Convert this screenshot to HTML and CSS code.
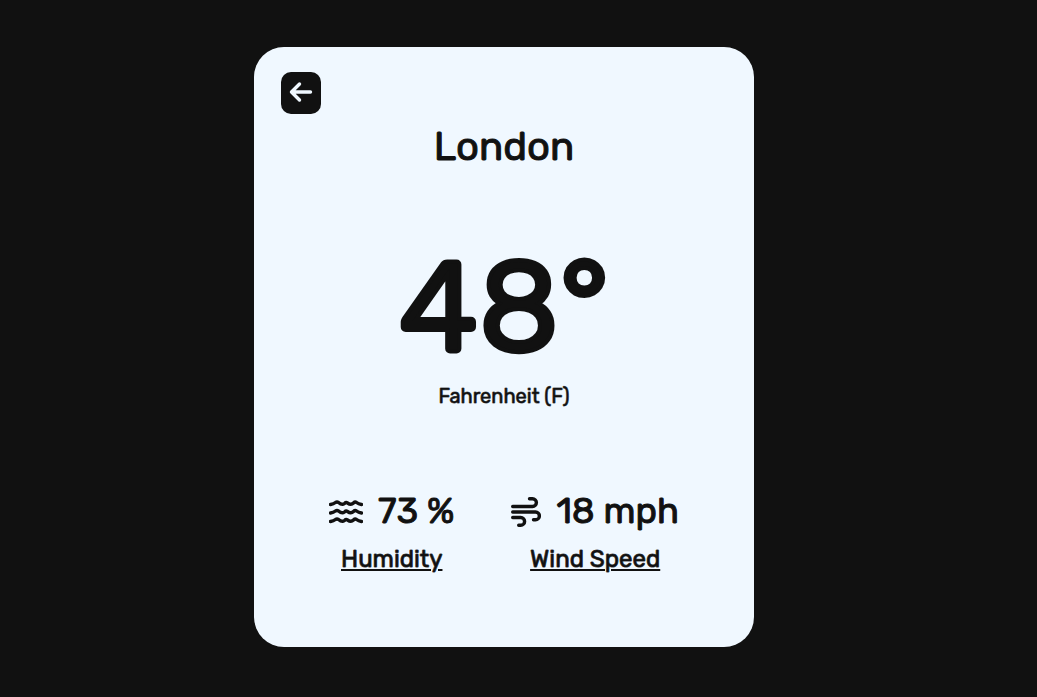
FILE: index.html
```html
<!DOCTYPE html>
<html lang="en">
<head>
<meta charset="utf-8">
<meta name="viewport" content="width=device-width, initial-scale=1">
<title>Weather</title>
<link rel="stylesheet" href="styles.css">
</head>
<body>
<main class="card">
  <button class="back" type="button" aria-label="Back">
    <svg class="back-icon" viewBox="0 0 24 22" aria-hidden="true"><path d="M10.500 3L2.500 11L10.500 19M2.500 11H21.500"/></svg>
  </button>
  <h1 class="city">London</h1>
  <p class="temperature">48°</p>
  <p class="unit">Fahrenheit (F)</p>
  <section class="stats">
    <div class="stat">
      <div class="reading">
        <svg class="waves-icon" viewBox="0 0 34 24" aria-hidden="true">
          <path d="M1.500 4.500Q4.500 4 6.500 2.500Q8 1.500 9.500 2.500Q13 5.500 15.500 3.500Q17 2 18.500 3Q22 5.500 24.500 3Q26 1.500 27.500 2.500Q29.500 4 32.500 4.500"/>
          <path d="M1.500 13Q4.500 12.500 6.500 11Q8 10 9.500 11Q13 14 15.500 12Q17 10.500 18.500 11.500Q22 14 24.500 11.500Q26 10 27.500 11Q29.500 12.500 32.500 13"/>
          <path d="M1.500 21.500Q4.500 21 6.500 19.500Q8 18.500 9.500 19.500Q13 22.500 15.500 20.500Q17 19 18.500 20Q22 22.500 24.500 20Q26 18.500 27.500 19.500Q29.500 21 32.500 21.500"/>
        </svg>
        <span>73 %</span>
      </div>
      <span class="label">Humidity</span>
    </div>
    <div class="stat">
      <div class="reading">
        <svg class="wind-icon" viewBox="0 0 30 30" aria-hidden="true">
          <path d="M1.700 9.500H21.500A3.900 3.900 0 0 0 21.500 1.700H18.500M1.700 15H24.500A3.900 3.900 0 0 1 24.500 22.800H22.500M1.700 20.500H9.700A3.900 3.900 0 0 1 9.700 28.300H7.700"/>
        </svg>
        <span>18 mph</span>
      </div>
      <span class="label">Wind Speed</span>
    </div>
  </section>
</main>
</body>
</html>
```
FILE: styles.css
```css
* {
  box-sizing: border-box;
}

body {
  margin: 0;
  min-height: 100vh;
  padding: 47px 29px 50px 0;
  background: #111;
  color: #111;
  font-family: Rubik, Roboto, sans-serif;
  font-weight: 400;
}

.card {
  display: flex;
  flex-direction: column;
  align-items: center;
  width: 100%;
  max-width: 500px;
  min-height: 600px;
  margin: 0 auto;
  padding: 25px 27px;
  border-radius: 30px;
  background: #f0f8ff;
  -webkit-text-stroke: 1px #111;
}

.back {
  display: flex;
  align-items: center;
  justify-content: center;
  align-self: flex-start;
  width: 40px;
  height: 42px;
  padding: 0 0 2px;
  border: 0;
  border-radius: 10px;
  background: #111;
  color: #f0f8ff;
  cursor: pointer;
}

svg {
  flex: none;
  fill: none;
  stroke: currentColor;
  stroke-width: 3.4;
  stroke-linecap: round;
  stroke-linejoin: round;
}

.back-icon {
  width: 24px;
  height: 22px;
}

.city {
  margin: 8px 0 0;
  font-size: 40px;
  font-weight: 400;
  line-height: 50px;
}

.temperature {
  margin: 56px 0 0;
  font-size: 128px;
  line-height: 158px;
  -webkit-text-stroke-width: 4px;
}

.unit {
  margin: 0;
  font-size: 20px;
  line-height: 20px;
  -webkit-text-stroke-color: rgb(17 17 17 / 70%);
}

.stats {
  display: flex;
  flex-wrap: wrap;
  justify-content: center;
  gap: 57px;
  margin-top: 84px;
}

.stat {
  display: flex;
  flex-direction: column;
  align-items: center;
  gap: 12px;
}

.reading {
  display: flex;
  align-items: center;
  gap: 15px;
  font-size: 36px;
  line-height: 42px;
}

.reading svg {
  margin-top: 2px;
}

.waves-icon {
  width: 34px;
  height: 24px;
}

.wind-icon {
  width: 30px;
  height: 30px;
}

.label {
  font-size: 24px;
  line-height: 30px;
  text-decoration: underline 2px #111;
  text-underline-offset: 2px;
  -webkit-text-stroke-color: rgb(17 17 17 / 80%);
}
```
